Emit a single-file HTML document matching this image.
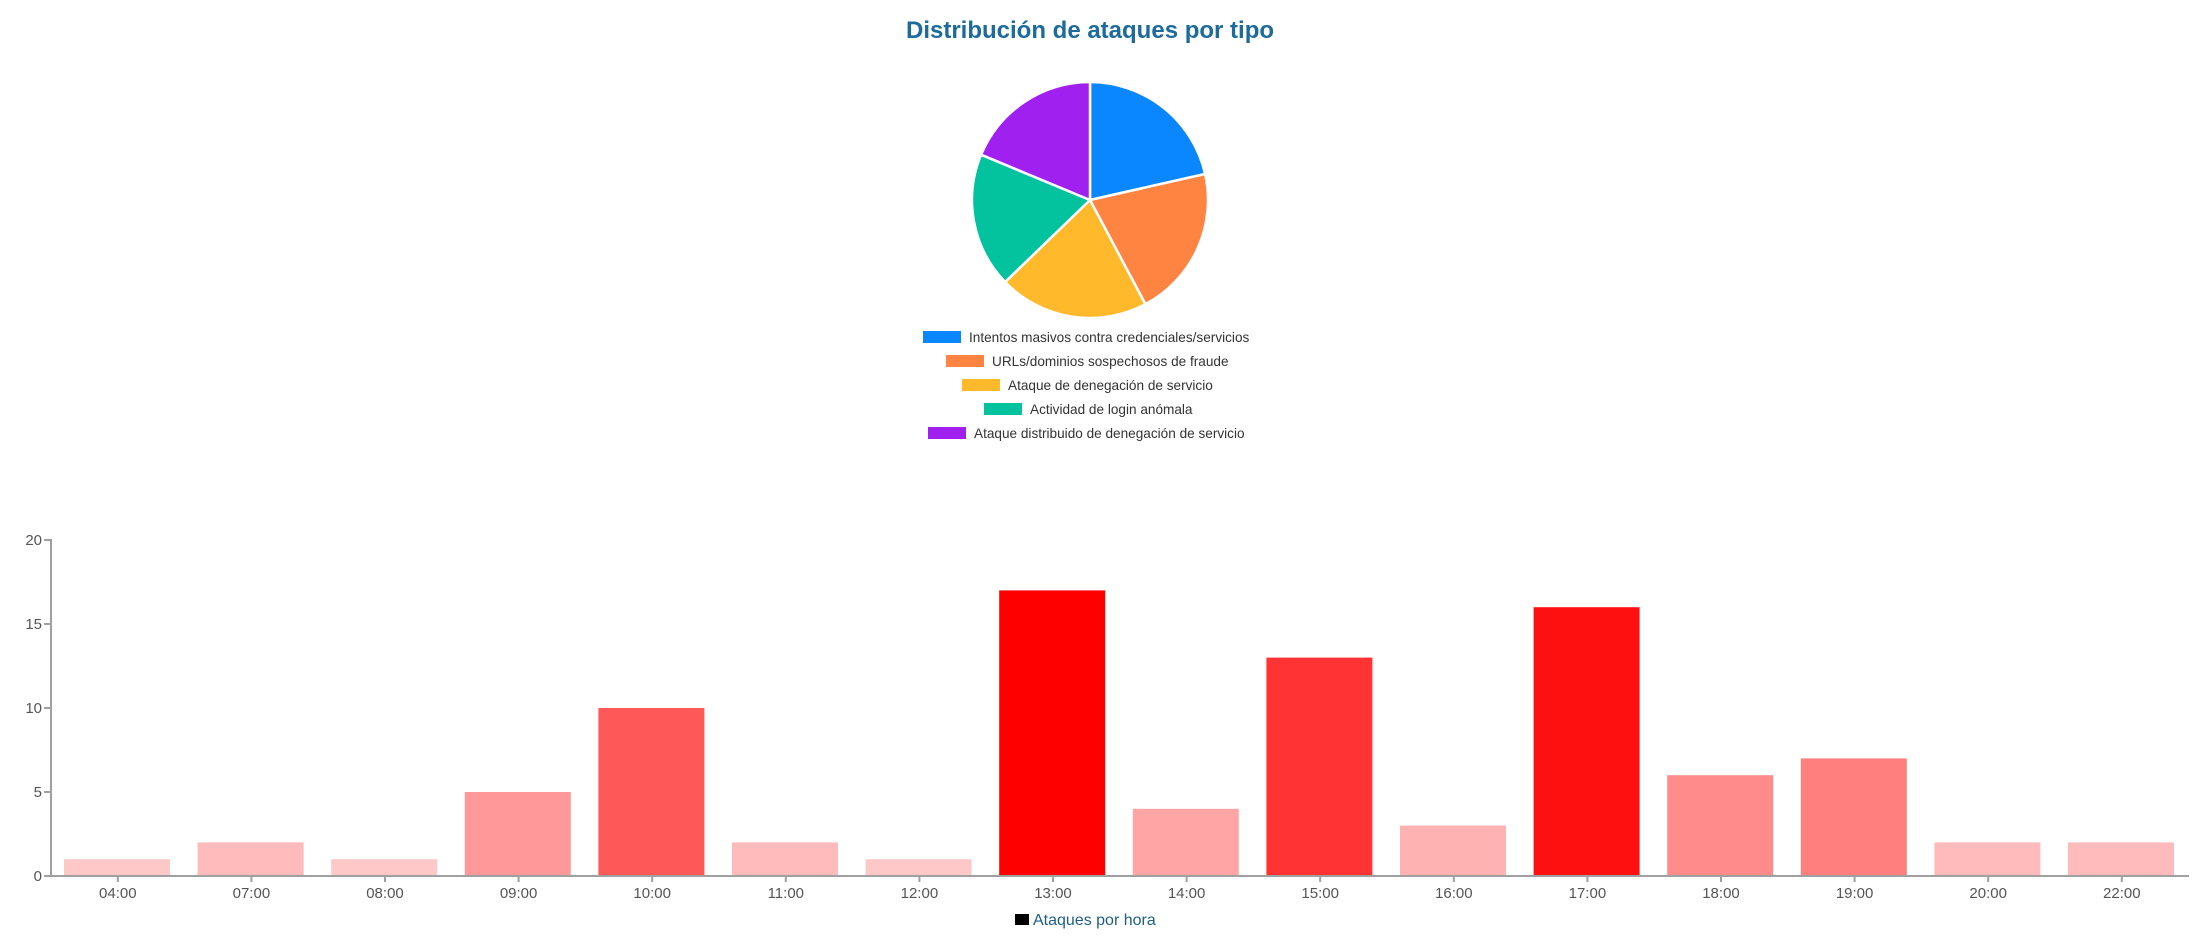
<!DOCTYPE html>
<html><head><meta charset="utf-8"><style>
html,body{margin:0;padding:0;background:#fff;width:2205px;height:939px;overflow:hidden}
svg{display:block}
</style></head><body>
<svg width="2205" height="939" xmlns="http://www.w3.org/2000/svg" font-family="'Liberation Sans', 'DejaVu Sans', sans-serif">
<text x="1090" y="38" text-anchor="middle" font-size="24" font-weight="bold" fill="#1c6b9c">Distribución de ataques por tipo</text>
<g stroke="#fff" stroke-width="2.5" stroke-linejoin="round">
<path d="M1090,200 L1090,82 A118,118 0 0 1 1205.1,174.0 Z" fill="#0a87ff"/>
<path d="M1090,200 L1205.1,174.0 A118,118 0 0 1 1145.4,304.2 Z" fill="#ff8442"/>
<path d="M1090,200 L1145.4,304.2 A118,118 0 0 1 1005.1,282.0 Z" fill="#ffb92a"/>
<path d="M1090,200 L1005.1,282.0 A118,118 0 0 1 981.1,154.7 Z" fill="#03c39e"/>
<path d="M1090,200 L981.1,154.7 A118,118 0 0 1 1090,82 Z" fill="#a020f0"/>
</g>
<g font-size="13.6" fill="#333">
<rect x="923" y="331" width="38" height="12" fill="#0a87ff"/><text x="969" y="342">Intentos masivos contra credenciales/servicios</text>
<rect x="946" y="355" width="38" height="12" fill="#ff8442"/><text x="992" y="366">URLs/dominios sospechosos de fraude</text>
<rect x="962" y="379" width="38" height="12" fill="#ffb92a"/><text x="1008" y="390">Ataque de denegación de servicio</text>
<rect x="984" y="403" width="38" height="12" fill="#03c39e"/><text x="1030" y="414">Actividad de login anómala</text>
<rect x="928" y="427" width="38" height="12" fill="#a020f0"/><text x="974" y="438">Ataque distribuido de denegación de servicio</text>
</g>
<g>
<rect x="64" y="859.2" width="106" height="16.8" fill="#ffc8c8"/>
<rect x="197.6" y="842.4" width="106" height="33.6" fill="#ffbbbb"/>
<rect x="331.2" y="859.2" width="106" height="16.8" fill="#ffc8c8"/>
<rect x="464.8" y="792" width="106" height="84" fill="#ff9898"/>
<rect x="598.4" y="708" width="106" height="168" fill="#ff5858"/>
<rect x="732" y="842.4" width="106" height="33.6" fill="#ffbbbb"/>
<rect x="865.6" y="859.2" width="106" height="16.8" fill="#ffc8c8"/>
<rect x="999.2" y="590.4" width="106" height="285.6" fill="#ff0000"/>
<rect x="1132.8" y="808.8" width="106" height="67.2" fill="#ffa5a5"/>
<rect x="1266.4" y="657.6" width="106" height="218.4" fill="#ff3333"/>
<rect x="1400" y="825.6" width="106" height="50.4" fill="#ffb2b2"/>
<rect x="1533.6" y="607.2" width="106" height="268.8" fill="#ff1010"/>
<rect x="1667.2" y="775.2" width="106" height="100.8" fill="#ff8b8b"/>
<rect x="1800.8" y="758.4" width="106" height="117.6" fill="#ff7e7e"/>
<rect x="1934.4" y="842.4" width="106" height="33.6" fill="#ffbbbb"/>
<rect x="2068" y="842.4" width="106" height="33.6" fill="#ffbbbb"/>
</g>
<g stroke="#a0a0a0" stroke-width="2" fill="none">
<path d="M44,540 H51 V876 H2189"/>
<path d="M44,624 H51 M44,708 H51 M44,792 H51 M44,876 H51"/>
<path d="M117.8,876v6M251.4,876v6M385,876v6M518.6,876v6M652.2,876v6M785.8,876v6M919.4,876v6M1053,876v6M1186.6,876v6M1320.2,876v6M1453.8,876v6M1587.4,876v6M1721,876v6M1854.6,876v6M1988.2,876v6M2121.8,876v6"/>
</g>
<g font-size="15" fill="#555" text-anchor="end">
<text x="42" y="545">20</text><text x="42" y="629">15</text><text x="42" y="713">10</text><text x="42" y="797">5</text><text x="42" y="881">0</text>
</g>
<g font-size="15" fill="#555" text-anchor="middle">
<text x="117.8" y="898">04:00</text><text x="251.4" y="898">07:00</text><text x="385" y="898">08:00</text><text x="518.6" y="898">09:00</text>
<text x="652.2" y="898">10:00</text><text x="785.8" y="898">11:00</text><text x="919.4" y="898">12:00</text><text x="1053" y="898">13:00</text>
<text x="1186.6" y="898">14:00</text><text x="1320.2" y="898">15:00</text><text x="1453.8" y="898">16:00</text><text x="1587.4" y="898">17:00</text>
<text x="1721" y="898">18:00</text><text x="1854.6" y="898">19:00</text><text x="1988.2" y="898">20:00</text><text x="2121.8" y="898">22:00</text>
</g>
<rect x="1015" y="914" width="14" height="11" fill="#000"/>
<text x="1033" y="925" font-size="16" fill="#1f5f85">Ataques por hora</text>
</svg>
</body></html>
